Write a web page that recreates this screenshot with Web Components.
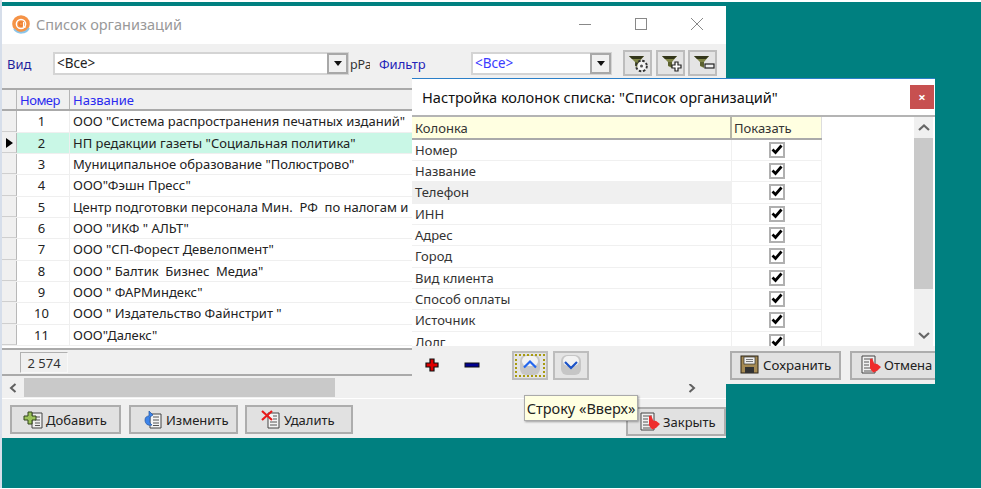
<!DOCTYPE html>
<html><head><meta charset="utf-8"><title>Список организаций</title>
<style>
html,body{margin:0;padding:0;width:981px;height:489px;overflow:hidden;background:#fff}
body{font:13px "Noto Sans",sans-serif;color:#222}
</style></head><body>
<x-desktop>
  <x-main-window></x-main-window>
  <x-columns-dialog></x-columns-dialog>
  <x-tooltip>Строку «Вверх»</x-tooltip>
</x-desktop>
<script>
const FONT='"Noto Sans",sans-serif';
const hand=`<path d="M9 4l2.200-.5 2 5 3 .5 3.800 3-4 4-4 1.500-3-4z" fill="#ee2c2c"/>`;
const ICONS={
 funnel:`<path d="M4 3h15l-5 6v6l-4-2V9z" fill="#7f8546"/><path d="M4 3h15l-3 3H7z" fill="#33361a"/><path d="M10 9h4v5l-4-1.500z" fill="#5c6130"/>`,
 gear:`<circle cx="16.500" cy="13" r="5.200" fill="none" stroke="#333" stroke-width="2.200" stroke-dasharray="2.400 1.700"/><circle cx="16.500" cy="13" r="4.300" fill="#f6f6f6"/><circle cx="16.500" cy="13" r="1.500" fill="#555"/>`,
 plusB:`<path d="M17 9h3v3h3v3h-3v3h-3v-3h-3v-3h3z" fill="#fff" stroke="#222" stroke-width="1.200"/>`,
 minusB:`<rect x="15" y="11" width="9" height="4" fill="#eee" stroke="#222" stroke-width="1.200"/>`,
 add:`<path d="M9 3h10v15H9z" fill="#eee" stroke="#444"/><path d="M12 7h5M12 10h5M12 13h5M12 15.500h5" stroke="#555"/><path d="M5 2h4v4h4v4H9v4H5v-4H1V6h4z" fill="#9cc35a" stroke="#33441c"/>`,
 edit:`<path d="M7 4h11v14H7z" fill="#f4f4f4" stroke="#444"/><path d="M10 7h6M10 10h6M10 13h6M10 15.500h6" stroke="#555"/><path d="M6 1l4 4-3 2v3c-1 3 1 4 2 5-4 1-7-1-7-5 0-3 2-4 4-4z" fill="#3d84ea" stroke="#24559e" stroke-width=".7"/>`,
 del:`<path d="M7 3h11v15H7z" fill="#f4f4f4" stroke="#444"/><path d="M12 6h4M12 9h4M9 12h7M9 15h7" stroke="#555"/><path d="M1 1l10 9M11 1L1 10" stroke="#e81a1a" stroke-width="2.200"/>`,
 close:`<path d="M1 1h13v17H1z" fill="#f0f0f0" stroke="#444"/><path d="M3 4h9M3 7h5M3 10h5M3 13h6M3 16h8" stroke="#555"/>`+hand,
 save:`<rect x="1" y="1" width="17" height="17" fill="#a58a54" stroke="#2d2416"/><rect x="4" y="2" width="11" height="7" fill="#eee" stroke="#333" stroke-width=".7"/><path d="M6 4.500h7M6 6.500h7" stroke="#777"/><rect x="5" y="12" width="9" height="6" fill="#333"/>`,
 up:`<rect x="0" y="0" width="20" height="20" rx="6" fill="#c6c6c6"/><rect x="2" y="1" width="16" height="10" rx="5" fill="#f2f2f2"/><path d="M4 12.500l6-6 6 6" fill="none" stroke="#2467ee" stroke-width="2.200"/>`,
 down:`<rect x="0" y="0" width="20" height="20" rx="6" fill="#c6c6c6"/><rect x="2" y="1" width="16" height="10" rx="5" fill="#f2f2f2"/><path d="M4 7l6 6 6-6" fill="none" stroke="#1a52c8" stroke-width="2.200"/>`
};
const svg=(k,w=20,h=20,vb=`0 0 ${w} ${h}`)=>`<svg width="${w}" height="${h}" viewBox="${vb}" style="display:block;flex:none">${k}</svg>`;
function def(name,css,html,init){
 customElements.define(name,class extends HTMLElement{
  constructor(){super();const r=this.attachShadow({mode:'open'});
   r.innerHTML=`<style>${css}</style>`+(typeof html==='function'?html(this):html);
   if(init)init(r,this);}
 });
}
def('x-desktop',`:host{display:block;position:relative;width:981px;height:489px;overflow:hidden;background:#fff}
 .bg{position:absolute;left:2px;top:2px;right:0;bottom:1px;background:#008080}
 .l{position:absolute;left:0;top:0;bottom:1px;width:2px;background:#d6deea}`,`<div class="l"></div><div class="bg"></div><slot></slot>`);

def('x-btn',`:host{display:flex;align-items:center;box-sizing:border-box;height:29px;border:2px solid #adadad;background:#e1e1e1;font:13px ${FONT};color:#222;white-space:nowrap;overflow:hidden;flex:none;padding-left:10px}
 .i{margin-right:3px;display:block}`,
 t=>`<span class="i">${svg(ICONS[t.getAttribute('icon')])}</span><slot></slot>`);

def('x-tool',`:host{display:flex;align-items:center;justify-content:center;box-sizing:border-box;width:29px;height:26px;border:2px solid #bdbdbd;background:#e4e4e4;flex:none}`,
 t=>svg(ICONS.funnel+ICONS[t.getAttribute('icon')],25,20));

def('x-combo',`:host{display:flex;box-sizing:border-box;height:23px;border:2px solid #d4d4d4;background:#fff;align-items:stretch;font:13.5px ${FONT};flex:none}
 .t{flex:1;padding-left:2px;line-height:19px}
 .b{width:21px;box-sizing:border-box;border:2px solid #a8a8a8;margin:-1px -1px -1px 0;background:#f0f0f0;display:flex;align-items:center;justify-content:center}
 .b i{width:0;height:0;border:4.5px solid transparent;border-top:5px solid #111;border-bottom:0}`,
 `<div class="t"><slot></slot></div><div class="b"><i></i></div>`);

def('x-org-grid',`:host{display:block;flex:none;height:260px;overflow:hidden;background:#fff;font:13px ${FONT}}
 .hd,.r{display:flex}
 .hd{height:23.4px;box-sizing:border-box;background:#f0f0f0;border-top:2px solid #aaa;border-bottom:2px solid #aaa;color:#2a2aef;line-height:20px}
 .m{width:15px;flex:none;box-sizing:border-box;border-right:1px solid #b8b8b8;background:#f0f0f0;position:relative}
 .n{width:53px;flex:none;box-sizing:border-box;padding-left:3px;border-right:1px solid #eee}
 .hd .n{border-right:1px solid #b5b5b5;padding-left:3px;letter-spacing:-.5px}
 .v{flex:1;padding-left:3px;white-space:pre;overflow:hidden}
 .r{height:21.33px;line-height:21px;border-bottom:1px solid #efefef;box-sizing:border-box;color:#222}
 .r .n{text-align:center;padding:0 3px 0 0}
 .r .m{border-bottom:1px solid #cfcfcf}
 .r.s{background:#c9f7e6}
 .r.s .m{background:#f0f0f0}
 .r.s .m:after{content:"";position:absolute;left:4px;top:5px;border:5px solid transparent;border-left:7px solid #000;border-right:0}`,
 `<div class="hd"><div class="m"></div><div class="n">Номер</div><div class="v">Название</div></div><div id="b"></div>`,
 r=>{const d=['ООО "Система распространения печатных изданий"','НП редакции газеты "Социальная политика"','Муниципальное образование "Полюстрово"','ООО"Фэшн Пресс"','Центр подготовки персонала Мин.  РФ  по налогам и','ООО "ИКФ " АЛЬТ"','ООО "СП-Форест Девелопмент"','ООО " Балтик  Бизнес  Медиа"','ООО " ФАРМиндекс"','ООО " Издательство Файнстрит "','ООО"Далекс"'];
  r.getElementById('b').innerHTML=d.map((t,i)=>`<div class="r${i==1?' s':''}"><div class="m"></div><div class="n">${i+1}</div><div class="v">${t}</div></div>`).join('');});

def('x-hscroll',`:host{display:flex;box-sizing:border-box;height:21px;background:#f0f0f0;align-items:center;flex:none}
 .thumb{width:311px;height:19px;background:#c9c9c9;margin-left:7px}
 svg{display:block;flex:none}.a{margin-left:7px}.c{margin-left:353px}`,
 `<svg class="a" width="8" height="10" viewBox="0 0 8 10"><path d="M6.500 1L2 5l4.500 4" fill="none" stroke="#606060" stroke-width="2"/></svg><div class="thumb"></div><svg class="c" width="8" height="10" viewBox="0 0 8 10"><path d="M1.500 1L6 5 1.500 9" fill="none" stroke="#606060" stroke-width="2"/></svg>`);

def('x-main-window',`:host{position:absolute;left:2px;top:6px;width:724px;height:432px;background:#f0f0f0;display:flex;flex-direction:column;font:13px ${FONT};overflow:hidden}
 .title{height:38px;flex:none;background:#fff;display:flex;align-items:center;color:#999;font-size:14.5px;box-sizing:border-box;padding-bottom:2px}
 .logo{margin:0 5px 0 9px}
 .wc{margin-left:auto;display:flex;padding-right:6px}
 .wc svg{display:block;width:46px;height:14px;margin-left:10px}
 .tb{height:44px;flex:none;box-sizing:border-box;display:flex;align-items:flex-start;padding:8px 0 0 5px;line-height:24px}
 .lbl{color:#1f1f9c}
 .clip{width:20px;overflow:hidden;color:#333;margin:1px 0 0 1px;flex:none;white-space:nowrap;font-size:12.5px}
 .foot{height:28px;flex:none;box-sizing:border-box;border-top:2px solid #aaa;border-bottom:2px solid #aaa;display:flex;align-items:center;padding-left:18px}
 .cnt{box-sizing:border-box;width:48px;height:21px;border:1px solid;border-color:#b0b0b0 #f8f8f8 #f8f8f8 #b0b0b0;text-align:center;line-height:21px;color:#333}
 .sp{height:1px;flex:none}
 .bot{flex:1;border-top:1px solid #fff;display:flex;align-items:flex-start;padding:6px 0 0 8px;gap:8px}`,
 `<div class="title"><svg class="logo" width="20" height="20" viewBox="0 0 20 20"><circle cx="10" cy="10" r="8.800" fill="#f59346"/><path d="M3 15a8.800 8.800 0 0 0 15-1" fill="none" stroke="#8cc6ea" stroke-width="1.800"/><circle cx="10" cy="10" r="4.600" fill="none" stroke="#fff" stroke-width="1.500"/><circle cx="10" cy="10" r="2" fill="none" stroke="#e8772a" stroke-width="1.200"/><path d="M12.500 8v5h2.500" fill="none" stroke="#fff" stroke-width="1.200"/></svg><span>Список организаций</span>
  <div class="wc"><svg viewBox="0 0 46 14"><path d="M17 7.500h12" stroke="#888"/></svg><svg viewBox="0 0 46 14"><rect x="17.500" y="1.500" width="11" height="11" fill="none" stroke="#888"/></svg><svg viewBox="0 0 46 14"><path d="M17 1l12 12M29 1L17 13" stroke="#888" fill="none"/></svg></div></div>
  <div class="tb"><span class="lbl" style="width:46px;flex:none">Вид</span><x-combo style="width:296px">&lt;Все&gt;</x-combo><span class="clip">рРа</span>
   <span class="lbl" style="margin-left:9px;width:92px;flex:none;color:#2323b8">Фильтр</span><x-combo style="width:141px;color:#3b3bff">&lt;Все&gt;</x-combo>
   <x-tool icon="gear" style="margin:-2px 0 0 11px"></x-tool><x-tool icon="plusB" style="margin:-2px 0 0 4px"></x-tool><x-tool icon="minusB" style="margin:-2px 0 0 3px"></x-tool></div>
  <x-org-grid></x-org-grid>
  <div class="foot"><div class="cnt">2 574</div></div><div class="sp"></div>
  <x-hscroll></x-hscroll>
  <div class="bot"><x-btn icon="add" style="width:111px;padding-left:11px;--g:4px">Добавить</x-btn><x-btn icon="edit" style="width:109px;padding-left:12px">Изменить</x-btn><x-btn icon="del" style="width:108px;padding-left:14px;margin-left:-1px">Удалить</x-btn><x-btn icon="close" style="width:100px;margin:2px 0 0 265px;padding-left:12px">Закрыть</x-btn></div>`);

def('x-col-grid',`:host{display:block;width:410px;font:13px ${FONT};color:#333}
 .r{display:flex;height:21.33px;box-sizing:border-box;border-bottom:1px solid #f0f0f0;line-height:20px}
 .a{flex:1;padding-left:3px;border-right:1px solid #f0f0f0}
 .b{width:90px;flex:none;display:flex;justify-content:center;padding-top:2px;box-sizing:border-box;border-right:1px solid #f0f0f0}
 .hd{height:22.6px;background:#ffffe1;border-bottom:2px solid #aaa;line-height:23px}
 .hd .a{border-right:2px solid #b5b5a5}.hd .b{display:block;padding:0 0 0 2px;border-right:1px solid #ddd}
 .hl .a{background:#f0f0f0}
 .c{box-sizing:border-box;width:16px;height:16px;border:2px solid #b0b0b0;background:#fff;display:block}`,
 `<div class="r hd"><div class="a">Колонка</div><div class="b">Показать</div></div><div id="b"></div>`,
 r=>{r.getElementById('b').innerHTML=['Номер','Название','Телефон','ИНН','Адрес','Город','Вид клиента','Способ оплаты','Источник','Долг'].map((t,i)=>`<div class="r${i==2?' hl':''}"><div class="a">${t}</div><div class="b"><span class="c"><svg width="12" height="12" viewBox="0 0 12 12" style="display:block"><path d="M1.500 5.500l3 3L10.500 1.500" fill="none" stroke="#000" stroke-width="2.700"/></svg></span></div></div>`).join('');});

def('x-columns-dialog',`:host{position:absolute;left:412px;top:78px;width:523px;height:306px;background:#fff;display:flex;flex-direction:column;border-top:1px solid #2b7fc8;box-sizing:border-box;font:13px ${FONT};overflow:hidden}
 .title{flex:none;display:flex;align-items:center;padding:0 1px 0 10px;color:#111;font-size:14.6px;border-bottom:2px solid #b4b4b4;box-sizing:border-box;height:38px}
 .x{margin-left:auto;width:24px;height:24px;background:#c75050;color:#fff;display:flex;align-items:center;justify-content:center;margin-top:-1px;font:bold 13px ${FONT}}
 .body{flex:1;display:flex;overflow:hidden;min-height:0}
 .sb{margin-left:auto;margin-right:2px;width:19px;background:#f0f0f0;display:flex;flex-direction:column;align-items:center}
 .sb svg{display:block;flex:none;height:21px}
 .th{height:151px;width:19px;background:#c9c9c9;flex:none}
 .tail{margin-top:auto}
 .bar{height:38px;flex:none;background:#f0f0f0;display:flex;align-items:center;overflow:hidden}
 .sym{width:16px;height:16px;flex:none}
 .ud{width:36px;height:29px;box-sizing:border-box;border:2px solid #bdbdbd;background:#e4e4e4;display:flex;align-items:center;justify-content:center;flex:none}
 .ud.f{outline:2px dotted #a89a10;outline-offset:-5px}`,
 `<div class="title"><span>Настройка колонок списка: "Список организаций"</span><div class="x">×</div></div>
 <div class="body"><x-col-grid></x-col-grid><div class="sb"><svg width="14" viewBox="0 0 14 21"><path d="M2 13l5-4.500 5 4.500" fill="none" stroke="#666" stroke-width="2.200"/></svg><div class="th"></div><svg class="tail" width="14" viewBox="0 0 14 21"><path d="M2 8l5 4.500 5-4.500" fill="none" stroke="#666" stroke-width="2.200"/></svg></div></div>
 <div class="bar">
  <svg class="sym" style="margin-left:12px" viewBox="0 0 16 16"><path d="M6 2h4v4h4v4h-4v4H6v-4H2V6h4z" fill="#e00000" stroke="#111" stroke-width="1.200"/></svg>
  <svg class="sym" style="margin-left:24px" viewBox="0 0 16 16"><rect x="1" y="6" width="14" height="4" fill="#000090" stroke="#111"/></svg>
  <div class="ud f" style="margin-left:32px">${svg(ICONS.up)}</div><div class="ud" style="margin-left:5px">${svg(ICONS.down)}</div>
  <x-btn icon="save" style="width:111px;margin-left:141px;padding-left:8px;font-size:13.3px">Сохранить</x-btn><x-btn icon="close" style="width:100px;margin-left:9px;padding-left:9px">Отмена</x-btn>
 </div>`);

def('x-tooltip',`:host{position:absolute;left:524px;top:395px;width:114px;height:26px;box-sizing:border-box;background:#ffffe1;border:1px solid #aaa;box-shadow:1px 1px 2px rgba(0,0,0,.35);font:14.5px ${FONT};color:#222;line-height:24px;text-align:center;white-space:nowrap}`,`<slot></slot>`);
</script>
</body></html>
